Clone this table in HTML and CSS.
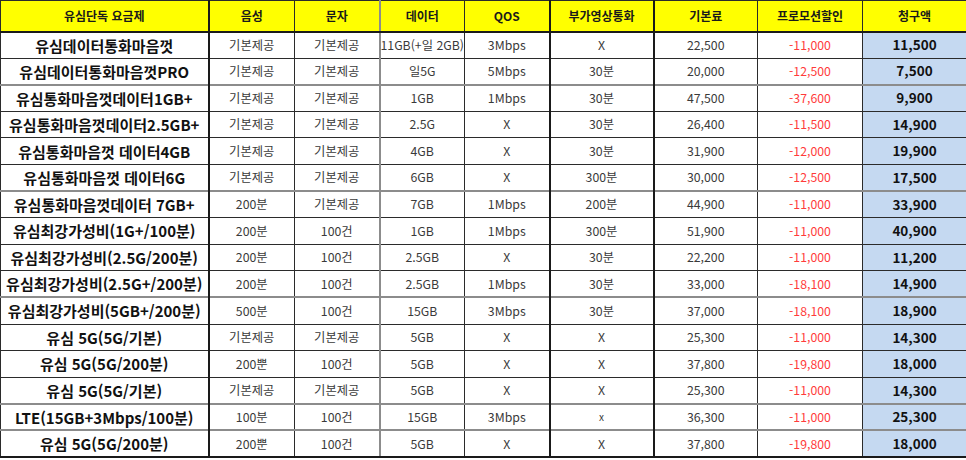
FILE: index.html
```html
<!DOCTYPE html>
<html lang="ko">
<head>
<meta charset="utf-8">
<link rel="stylesheet" href="styles.css">
</head>
<body>
<table class="plans">
  <colgroup>
    <col class="w-name"><col class="w-86"><col class="w-85"><col class="w-85"><col class="w-85"><col class="w-104"><col class="w-104"><col class="w-105"><col class="w-104">
  </colgroup>
  <thead>
    <tr class="head">
      <th class="c1">유심단독 요금제</th><th class="c2">음성</th><th class="c3">문자</th><th class="c4">데이터</th><th class="c5">QOS</th><th class="c6">부가영상통화</th><th class="c7">기본료</th><th class="c8">프로모션할인</th><th class="c9">청구액</th>
    </tr>
  </thead>
  <tbody>
    <tr><td class="c1 name">유심데이터통화마음껏</td><td class="c2">기본제공</td><td class="c3">기본제공</td><td class="c4">11GB(+일 2GB)</td><td class="c5">3Mbps</td><td class="c6">X</td><td class="c7">22,500</td><td class="c8 minus">-11,000</td><td class="c9 total">11,500</td></tr>
    <tr><td class="c1 name">유심데이터통화마음껏PRO</td><td class="c2">기본제공</td><td class="c3">기본제공</td><td class="c4">일5G</td><td class="c5">5Mbps</td><td class="c6">30분</td><td class="c7">20,000</td><td class="c8 minus">-12,500</td><td class="c9 total">7,500</td></tr>
    <tr class="gtop"><td class="c1 name">유심통화마음껏데이터1GB+</td><td class="c2">기본제공</td><td class="c3">기본제공</td><td class="c4">1GB</td><td class="c5">1Mbps</td><td class="c6">30분</td><td class="c7">47,500</td><td class="c8 minus">-37,600</td><td class="c9 total">9,900</td></tr>
    <tr><td class="c1 name">유심통화마음껏데이터2.5GB+</td><td class="c2">기본제공</td><td class="c3">기본제공</td><td class="c4">2.5G</td><td class="c5">X</td><td class="c6">30분</td><td class="c7">26,400</td><td class="c8 minus">-11,500</td><td class="c9 total">14,900</td></tr>
    <tr><td class="c1 name">유심통화마음껏 데이터4GB</td><td class="c2">기본제공</td><td class="c3">기본제공</td><td class="c4">4GB</td><td class="c5">X</td><td class="c6">30분</td><td class="c7">31,900</td><td class="c8 minus">-12,000</td><td class="c9 total">19,900</td></tr>
    <tr><td class="c1 name">유심통화마음껏 데이터6G</td><td class="c2">기본제공</td><td class="c3">기본제공</td><td class="c4">6GB</td><td class="c5">X</td><td class="c6">300분</td><td class="c7">30,000</td><td class="c8 minus">-12,500</td><td class="c9 total">17,500</td></tr>
    <tr class="gtop"><td class="c1 name">유심통화마음껏데이터 7GB+</td><td class="c2">200분</td><td class="c3">기본제공</td><td class="c4">7GB</td><td class="c5">1Mbps</td><td class="c6">200분</td><td class="c7">44,900</td><td class="c8 minus">-11,000</td><td class="c9 total">33,900</td></tr>
    <tr><td class="c1 name">유심최강가성비(1G+/100분)</td><td class="c2">200분</td><td class="c3">100건</td><td class="c4">1GB</td><td class="c5">1Mbps</td><td class="c6">300분</td><td class="c7">51,900</td><td class="c8 minus">-11,000</td><td class="c9 total">40,900</td></tr>
    <tr><td class="c1 name">유심최강가성비(2.5G/200분)</td><td class="c2">200분</td><td class="c3">100건</td><td class="c4">2.5GB</td><td class="c5">X</td><td class="c6">30분</td><td class="c7">22,200</td><td class="c8 minus">-11,000</td><td class="c9 total">11,200</td></tr>
    <tr><td class="c1 name">유심최강가성비(2.5G+/200분)</td><td class="c2">200분</td><td class="c3">100건</td><td class="c4">2.5GB</td><td class="c5">1Mbps</td><td class="c6">30분</td><td class="c7">33,000</td><td class="c8 minus">-18,100</td><td class="c9 total">14,900</td></tr>
    <tr class="gtop"><td class="c1 name">유심최강가성비(5GB+/200분)</td><td class="c2">500분</td><td class="c3">100건</td><td class="c4">15GB</td><td class="c5">3Mbps</td><td class="c6">30분</td><td class="c7">37,000</td><td class="c8 minus">-18,100</td><td class="c9 total">18,900</td></tr>
    <tr><td class="c1 name">유심 5G(5G/기본)</td><td class="c2">기본제공</td><td class="c3">기본제공</td><td class="c4">5GB</td><td class="c5">X</td><td class="c6">X</td><td class="c7">25,300</td><td class="c8 minus">-11,000</td><td class="c9 total">14,300</td></tr>
    <tr><td class="c1 name">유심 5G(5G/200분)</td><td class="c2">200뿐</td><td class="c3">100건</td><td class="c4">5GB</td><td class="c5">X</td><td class="c6">X</td><td class="c7">37,800</td><td class="c8 minus">-19,800</td><td class="c9 total">18,000</td></tr>
    <tr><td class="c1 name">유심 5G(5G/기본)</td><td class="c2">기본제공</td><td class="c3">기본제공</td><td class="c4">5GB</td><td class="c5">X</td><td class="c6">X</td><td class="c7">25,300</td><td class="c8 minus">-11,000</td><td class="c9 total">14,300</td></tr>
    <tr class="gtop"><td class="c1 name">LTE(15GB+3Mbps/100분)</td><td class="c2">100분</td><td class="c3">100건</td><td class="c4">15GB</td><td class="c5">3Mbps</td><td class="c6 small">x</td><td class="c7">36,300</td><td class="c8 minus">-11,000</td><td class="c9 total">25,300</td></tr>
    <tr class="gtop"><td class="c1 name">유심 5G(5G/200분)</td><td class="c2">200뿐</td><td class="c3">100건</td><td class="c4">5GB</td><td class="c5">X</td><td class="c6">X</td><td class="c7">37,800</td><td class="c8 minus">-19,800</td><td class="c9 total">18,000</td></tr>
  </tbody>
</table>
</body>
</html>
```

FILE: styles.css
```css
html, body {
  margin: 0;
  padding: 0;
  background: #ffffff;
}

.plans {
  width: 966px;
  table-layout: fixed;
  border-collapse: collapse;
  font-family: "Noto Sans CJK KR", "Noto Sans", sans-serif;
  color: #3a3a3a;
  font-size: 12.3px;
}

.w-name { width: 208px; }
.w-86 { width: 86px; }
.w-85 { width: 85px; }
.w-104 { width: 104px; }
.w-105 { width: 105px; }

.plans th,
.plans td {
  padding: 0;
  text-align: center;
  vertical-align: middle;
  white-space: nowrap;
  overflow: hidden;
  border-top: 1px solid #2b2b2b;
  border-bottom: 1px solid #2b2b2b;
  border-left: 1px solid #2b2b2b;
  border-right: 1px solid #2b2b2b;
  line-height: 1;
}

.head {
  height: 31px;
}
.head th {
  background: #ffff00;
  color: #1a1a1a;
  font-weight: 700;
  font-size: 12px;
  border-bottom: 2px solid #1a1a1a;
}

tbody tr {
  height: 26.6px;
}

.plans .c1 { border-left: 1px solid #2b2b2b; }
.plans .c2 { border-left: 2px solid #1a1a1a; }
.plans .c4 { border-left: 2px solid #8c8c8c; }
.plans .c6 { border-left: 2px solid #1a1a1a; }
.plans .c7 { border-left: 2px solid #1a1a1a; }

.plans tr.gtop td {
  border-top: 2px solid #8c8c8c;
}

.plans tbody tr:last-child td {
  border-bottom: 2px solid #1a1a1a;
}

.name {
  font-weight: 700;
  font-size: 15px;
  color: #111111;
}

.minus {
  color: #ff3b3b;
}

.total {
  background: #c5d9f1;
  font-weight: 700;
  font-size: 13.5px;
  color: #111111;
}

.small {
  font-size: 10px;
}
```
